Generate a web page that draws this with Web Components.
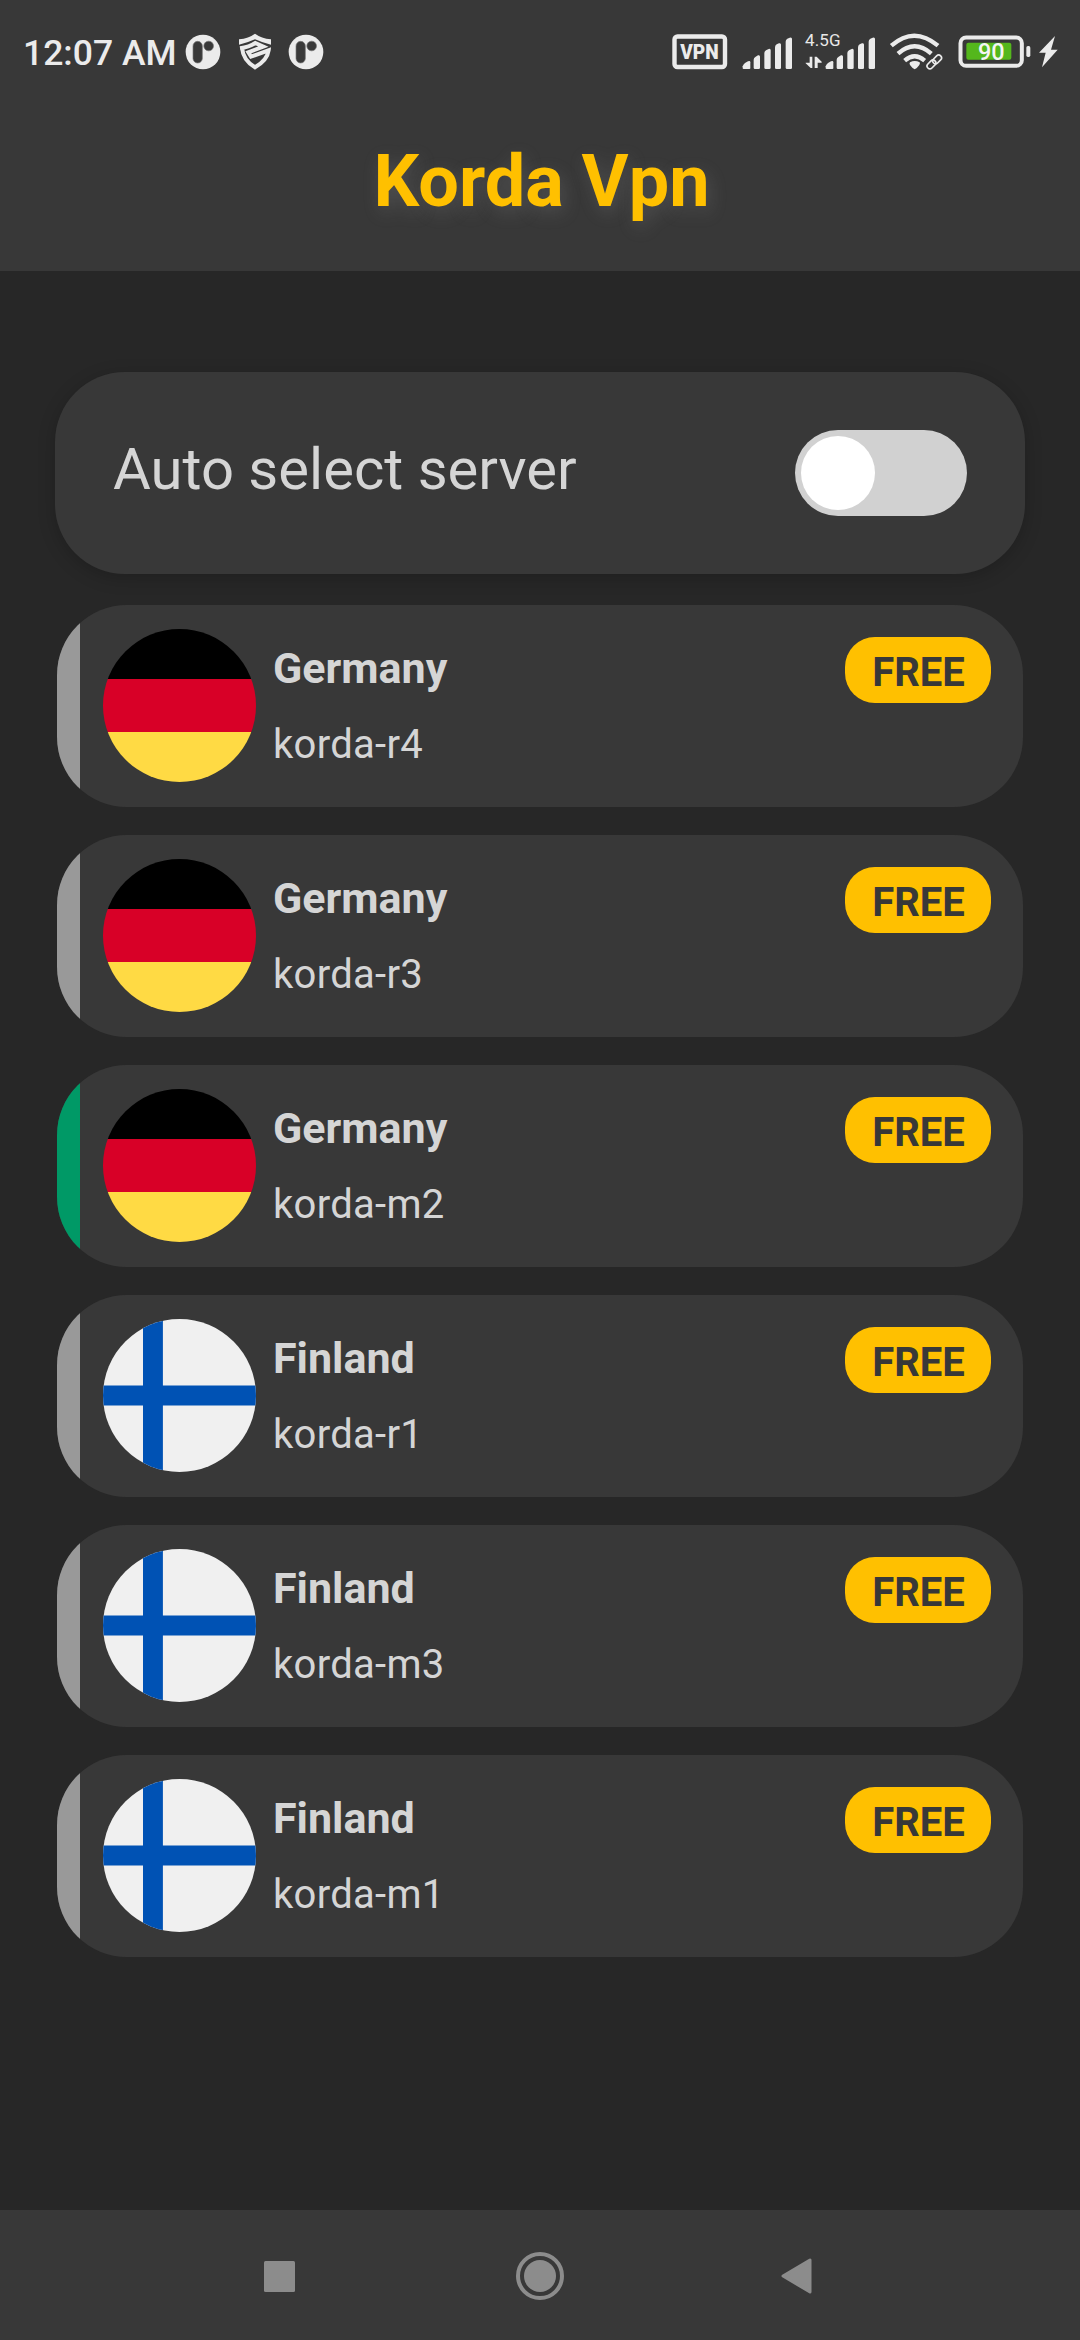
<!DOCTYPE html>
<html lang="en">
<head>
<meta charset="utf-8">
<title>Korda Vpn</title>
<style>
html,body{margin:0;padding:0;background:#272727}
body{width:1080px;height:2340px;overflow:hidden;font-family:Roboto,"Liberation Sans",sans-serif;color:#d5d5d5}
</style>
</head>
<body>
<vpn-app></vpn-app>
<script>
const define = (name, html, setup) => {
  const tpl = document.createElement('template');
  tpl.innerHTML = html;
  customElements.define(name, class extends HTMLElement {
    constructor() {
      super();
      this.attachShadow({mode: 'open'}).append(tpl.content.cloneNode(true));
    }
    connectedCallback() { if (setup) setup(this, this.shadowRoot); }
  });
};

define('p-icon', `
<style>:host{display:block;width:36px;height:36px}svg{display:block}</style>
<svg width="36" height="36" viewBox="0 0 108 108">
  <circle cx="54" cy="54" r="52" fill="#ebebeb"/>
  <rect x="24" y="22" width="28" height="65" rx="14" fill="#393939" stroke="#777" stroke-width="2"/>
  <circle cx="71" cy="36" r="14.5" fill="#393939" stroke="#777" stroke-width="2"/>
</svg>`);

define('shield-icon', `
<style>:host{display:block;width:34px;height:38px}svg{display:block}</style>
<svg width="34" height="38" viewBox="0 0 102 114">
  <path fill="#ebebeb" d="M3 19Q32 16 51 2Q70 16 99 19V35Q70 28 51 19Q32 28 3 35Z"/>
  <path fill="none" stroke="#ebebeb" stroke-width="12" stroke-linejoin="miter" d="M6 46Q34 42 52 30L76 41L31 58L39 71L92 52Q88 82 51 103Q15 82 12 44"/>
</svg>`);

define('vpn-icon', `
<style>:host{display:block;width:56px;height:36px}svg{display:block}</style>
<svg width="56" height="36" viewBox="0 0 56 36">
  <rect x="2.5" y="2.5" width="50.5" height="30.5" rx="3" fill="none" stroke="#ebebeb" stroke-width="4.4"/>
  <text x="8.2" y="25" textLength="38.5" lengthAdjust="spacingAndGlyphs" font-size="20.5" font-weight="900" fill="#ebebeb">VPN</text>
</svg>`);

define('signal-bars', `
<style>:host{display:block;width:51px;height:34px}svg{display:block}</style>
<svg width="51" height="34" viewBox="0 0 153 102" fill="#ebebeb">
  <path d="M2 97V91Q3 86 9 81L18 76Q25 73 25 79V97Q25 99 22 99H5Q2 99 2 97Z"/>
  <path d="M35 95V71Q35 65 41 62L48 58Q54 56 54 62V95Q54 99 50 99H39Q35 99 35 95Z"/>
  <path d="M67 95V51Q67 46 72 43L80 39Q86 37 86 43V95Q86 99 82 99H71Q67 99 67 95Z"/>
  <path d="M99 95V34Q99 28 104 25L111 22Q117 20 117 26V95Q117 99 113 99H103Q99 99 99 95Z"/>
  <path d="M131 95V17Q131 11 136 8L143 5Q150 3 150 9V95Q150 99 146 99H135Q131 99 131 95Z"/>
</svg>`);

define('mobile-data', `
<style>
:host{display:flex;align-items:flex-end;position:relative;height:38px}
svg{display:block}
.label{position:absolute;left:0;top:-2.500px;font-size:17px;line-height:20px;color:#e8e8e8;letter-spacing:.1px}
.arrows{margin:0 2px 1px 0}
</style>
<svg class="arrows" width="18" height="13" viewBox="0 0 54 39" fill="#ebebeb">
  <path d="M14 2H22V36H17L2 22V20H14Z"/><path d="M29 2H35L50 17V20H38V36H29Z"/>
</svg>
<signal-bars></signal-bars><span class="label">4.5G</span>`);

define('wifi-icon', `
<style>:host{display:block;width:54px;height:38px}svg{display:block}</style>
<svg width="54" height="38" viewBox="0 0 162 114" fill="none" stroke="#ebebeb">
  <path stroke-width="13" d="M7 38Q75 -22 147 38"/>
  <path stroke-width="13" d="M27 62Q77 18 127 62"/>
  <path stroke-width="13" d="M47 83Q77 57 107 83"/>
  <path fill="#ebebeb" stroke="none" d="M63 88Q77 80 92 88Q94 91 91 96Q84 106 77 109Q70 106 63 96Q60 91 63 88Z"/>
  <g stroke="#393939" stroke-width="15"><rect x="113" y="86" width="28" height="16" rx="8" transform="rotate(-45 127 94)"/><rect x="128" y="70" width="30" height="17" rx="8.5" transform="rotate(-45 143 78)"/></g>
  <g stroke-width="5"><rect x="112" y="86" width="30" height="17" rx="8.5" transform="rotate(-45 127 94)"/><rect x="129" y="71" width="30" height="17" rx="8.5" transform="rotate(-45 144 79)"/></g>
</svg>`);

define('battery-icon', `
<style>:host{display:block;width:100px;height:34px}svg{display:block}</style>
<svg width="100" height="34" viewBox="0 0 300 102">
  <rect x="7.5" y="7.500" width="184" height="85" rx="17" fill="none" stroke="#ebebeb" stroke-width="12"/>
  <rect x="25" y="23" width="135" height="51" rx="6" fill="#54b71c"/>
  <rect x="205" y="33" width="12" height="33" rx="5" fill="#ebebeb"/>
  <text x="60" y="76" textLength="80" lengthAdjust="spacingAndGlyphs" font-size="70" font-weight="500" fill="#f5f5f5">90</text>
  <path fill="#ebebeb" d="M291 3L243 53H263L252 97L299 44H279Z"/>
</svg>`);

define('status-bar', `
<style>
:host{display:flex;justify-content:space-between;align-items:flex-start;height:100px;box-sizing:border-box;padding:33px 22px 0 23px}
.group{display:flex;align-items:flex-start}
.time{font-size:35.5px;font-weight:500;line-height:40px;color:#ebebeb;width:162px;white-space:nowrap}
shield-icon{margin:0 16px 0 17px}
vpn-icon{margin:1px 14px 0 0}
.one{margin:3px 12px 0 0}
mobile-data{margin:-1px 13px 0 0}
wifi-icon{margin-right:15px}
battery-icon{margin-top:2px}
p-icon{margin-top:.5px}
</style>
<div class="group"><span class="time">12:07 AM</span><p-icon></p-icon><shield-icon></shield-icon><p-icon></p-icon></div>
<div class="group"><vpn-icon></vpn-icon><signal-bars class="one"></signal-bars><mobile-data></mobile-data><wifi-icon></wifi-icon><battery-icon></battery-icon></div>`);

define('app-header', `
<style>
:host{display:flow-root;height:271px;background:#383838}
h1{margin:32px 0 0;padding-left:3px;text-align:center;font-size:72px;line-height:100px;font-weight:700;color:#ffc000;text-shadow:3px 6px 18px rgba(170,170,170,.22)}
</style>
<status-bar></status-bar><h1><slot></slot></h1>`);

define('toggle-switch', `
<style>
:host{display:block;width:172px;height:86px;box-sizing:border-box;padding:6px;border-radius:43px;background:#d1d1d1}
i{display:block;width:74px;height:74px;border-radius:50%;background:#fff}
</style><i></i>`);

define('auto-select', `
<style>
:host{display:flex;justify-content:space-between;align-items:center;height:202px;box-sizing:border-box;margin:0 55px;padding:0 58px;border-radius:70px;background:#383838;box-shadow:0 4px 18px rgba(0,0,0,.2)}
span{font-size:58px;line-height:70px;margin-bottom:8px}
</style><span><slot></slot></span><toggle-switch></toggle-switch>`);

define('country-flag', `
<style>:host{display:block;width:153px;height:153px}svg{display:none}:host([code=de]) .de,:host([code=fi]) .fi{display:block}</style>
<svg class="de" width="153" height="153" viewBox="0 0 153 153"><defs><clipPath id="c"><circle cx="76.500" cy="76.500" r="76.500"/></clipPath></defs><g clip-path="url(#c)"><path d="M0 0H153V50H0Z"/><path fill="#d80027" d="M0 50H153V103H0Z"/><path fill="#ffda44" d="M0 103H153V153H0Z"/></g></svg>
<svg class="fi" width="153" height="153" viewBox="0 0 153 153"><defs><clipPath id="d"><circle cx="76.500" cy="76.500" r="76.500"/></clipPath></defs><g clip-path="url(#d)"><path fill="#f0f0f0" d="M0 0H153V153H0Z"/><path fill="#0052b4" d="M0 66.600H40V0H59.900V66.600H153V86.500H59.900V153H40V86.500H0Z"/></g></svg>`);

define('server-row', `
<style>
:host{display:flex;height:202px;border-radius:70px;background:#383838;overflow:hidden;--mark:#999}
:host([active]){--mark:#009966}
.mark{width:23px;background:var(--mark)}
country-flag{margin:24px 17px 0 23px}
.text{display:flex;flex-direction:column;gap:26.500px;flex:1;padding-top:38px;line-height:50px}
.name{font-size:43px;font-weight:700}
.id{font-size:40px;letter-spacing:.3px}
.badge{margin:32px 32px 0 0;width:146px;height:66px;box-sizing:border-box;padding:5px 0 0 1px;border-radius:30px;background:#ffc000;color:#383838;text-align:center;font-size:40px;font-weight:700;line-height:61px}
</style>
<div class="mark"></div><country-flag></country-flag>
<div class="text"><span class="name"><slot></slot></span><span class="id"><slot name="id"></slot></span></div>
<div class="badge">FREE</div>`, (el, root) => root.querySelector('country-flag').setAttribute('code', el.getAttribute('code')));

define('nav-bar', `
<style>
:host{display:flex;align-items:center;height:130px;box-sizing:border-box;padding:2px 0 0 264px;background:#383838}
svg{display:block}
.home{margin:0 217px 0 221px}
</style>
<svg width="31" height="31"><rect width="31" height="31" rx="1.500" fill="#8c8c8c"/></svg>
<svg class="home" width="48" height="48"><circle cx="24" cy="24" r="22" fill="none" stroke="#8c8c8c" stroke-width="4"/><circle cx="24" cy="24" r="16" fill="#8c8c8c"/></svg>
<svg width="31" height="36"><path d="M2 18L29 2V34Z" fill="#8c8c8c" stroke="#8c8c8c" stroke-width="3" stroke-linejoin="round"/></svg>`);

define('vpn-app', `
<style>
:host{display:flex;flex-direction:column;width:1080px;height:2340px;background:#272727}
main{flex:1;padding-top:101px}
.list{display:flex;flex-direction:column;gap:28px;margin:31px 57px 0}
</style>
<app-header>Korda Vpn</app-header>
<main>
  <auto-select>Auto select server</auto-select>
  <div class="list">
    <server-row code="de">Germany<span slot="id">korda-r4</span></server-row>
    <server-row code="de">Germany<span slot="id">korda-r3</span></server-row>
    <server-row code="de" active>Germany<span slot="id">korda-m2</span></server-row>
    <server-row code="fi">Finland<span slot="id">korda-r1</span></server-row>
    <server-row code="fi">Finland<span slot="id">korda-m3</span></server-row>
    <server-row code="fi">Finland<span slot="id">korda-m1</span></server-row>
  </div>
</main>
<nav-bar></nav-bar>`);
</script>
</body>
</html>
